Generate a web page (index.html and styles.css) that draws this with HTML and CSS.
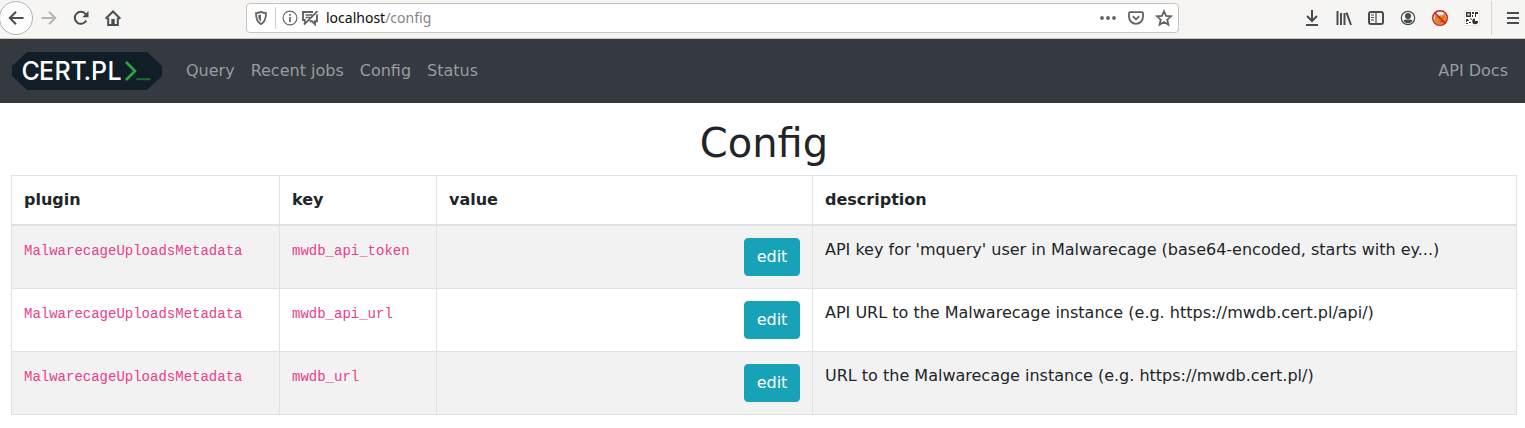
FILE: index.html
```html
<!DOCTYPE html>
<html lang="en">
<head>
<meta charset="utf-8">
<title>Config</title>
<link rel="stylesheet" href="styles.css">
</head>
<body>
<header class="toolbar">
  <div class="history">
    <span class="back"><svg class="icon" viewBox="0 0 16 16"><path d="M15.500 8H2M8 1.700L1.800 8 8 14.300"/></svg></span>
    <svg class="icon disabled" viewBox="0 0 16 16"><path d="M.5 8H14M8 1.700L14.200 8 8 14.300"/></svg>
    <svg class="icon" viewBox="0 0 16 16"><path d="M13.200 10.500A6 6 0 1 1 12.600 4.200"/><path class="solid" d="M15.500 1v6.200H9.300z"/></svg>
    <svg class="icon" viewBox="0 0 16 16"><path d="M.7 8.700L8 1.500l7.300 7.200M3.200 8v7h9.600V8"/><path class="solid" d="M6.300 9h3.400v6H6.300z"/></svg>
  </div>
  <div class="address">
    <svg class="icon grey" viewBox="0 0 16 16"><path d="M8 1.900c1.800.9 3.400 1.200 5 1.200 0 5.800-.8 9.100-5 11-4.200-1.900-5-5.200-5-11 1.600 0 3.200-.3 5-1.200z"/><path class="solid" d="M8 4.500v7.200C5.800 10.300 5.300 8.200 5.200 5.300z"/></svg>
    <span class="divider"></span>
    <svg class="icon grey thin info" viewBox="0 0 16 16"><circle cx="8" cy="8" r="6.900"/><path class="mark" d="M8 7v5M8 4v1.700"/></svg>
    <svg class="icon grey thin" viewBox="0 0 16 16"><path class="bubble" d="M11 2H1v8h1.800v3.500M15 4.500v6.700h-2v3L10 11.300H7.500"/><path class="mark" d="M15.500 1.200L2 14.700"/><path class="lines" d="M3.500 5h7M3.500 7.500h4.500"/></svg>
    <span class="url"><span class="host">localhost</span>/config</span>
    <div class="actions">
      <svg class="icon grey" viewBox="0 0 16 16"><g class="solid"><circle cx="2" cy="8" r="1.900"/><circle cx="8" cy="8" r="1.900"/><circle cx="14" cy="8" r="1.900"/></g></svg>
      <svg class="icon grey" viewBox="0 0 16 16"><path d="M2 2.200h12q1 0 1 1v3.600a7 7 0 0 1-14 0V3.200q0-1 1-1zM4.800 6.200L8 9.300l3.200-3.100"/></svg>
      <svg class="icon grey" viewBox="0 0 16 16"><path d="M8 1.200l2 4.600 5 .5-3.700 3.400 1.100 5L8 12.100l-4.400 2.600 1.100-5L1 6.300l5-.5z"/></svg>
    </div>
  </div>
  <div class="tools">
    <svg class="icon" viewBox="0 0 16 16"><path d="M8 0v10.500M3 6l5 5 5-5M2 15h12"/></svg>
    <svg class="icon" viewBox="0 0 16 16"><path d="M1.500 1v14M5 3v12M8.500 3v12M10.500 2.700L15 15"/></svg>
    <svg class="icon" viewBox="0 0 16 16"><rect x="1" y="2" width="14" height="12" rx="2"/><path class="hair" d="M8 2v12M3 5h3M3 7.500h3M3 10h3"/></svg>
    <svg class="icon" viewBox="0 0 16 16"><circle class="hair" cx="8" cy="8" r="6.700"/><circle class="solid" cx="8" cy="6" r="3"/><path class="solid" d="M3.300 11q1.200-1.800 3.300-1.500h2.800q2.100-.3 3.300 1.500Q11 13.300 8 13.300T3.300 11z"/></svg>
    <svg class="icon" viewBox="0 0 16 16"><path class="fox" d="M2.500 4l3 2 3-1 1.500.5L13 3l1 4 .5 4-3 3H5l-3-3 1-3z"/><path class="foxline" d="M6 7.500l1 1M11 7v1M7.500 11l2 .7 2-.9"/><circle class="ban" cx="8" cy="8" r="7.300"/><path class="ban" d="M3 3l10 10"/></svg>
    <svg class="icon" viewBox="0 0 16 16"><rect class="paper" x=".5" y=".5" width="15" height="15" rx="1"/><path class="qr" d="M2 2h5v5H2zM3.500 3.500v2h2v-2zM8 2h2v2H8zM11 2h3v2h-2v3h-1zM8 5h1v2H8zM2 9h2v1h1v1H3v1H2zM5 12h2v1H5zM2 13h2v1H2zM6 8.500h2v1H6z"/><path class="qr" d="M11 8.500v2.500h3a2.900 2.900 0 1 1-3-2.500z"/></svg>
    <span class="tool-divider"></span>
    <svg class="icon" viewBox="0 0 16 16"><path d="M2 3h12M2 8h12M2 13h12"/></svg>
  </div>
</header>
<nav class="navbar">
  <svg class="brand" viewBox="0 0 150 38">
    <path class="badge" d="M15 0h120l15 14v10l-15 14H15L0 24V14z"/>
    <text class="brand-text" x="9.500 27 42.500 58.500 71.500 79 95.500" y="28">CERT.PL</text>
    <path class="prompt" d="M114 10l9 9-9 9"/>
    <path class="cursor" d="M124.500 27.200h14"/>
  </svg>
  <a class="link">Query</a>
  <a class="link">Recent jobs</a>
  <a class="link">Config</a>
  <a class="link">Status</a>
  <a class="link docs">API Docs</a>
</nav>
<main class="content">
  <h1 class="title">Config</h1>
  <table class="config">
    <colgroup><col class="c-plugin"><col class="c-key"><col class="c-value"><col></colgroup>
    <thead><tr><th>plugin</th><th>key</th><th>value</th><th>description</th></tr></thead>
    <tbody>
      <tr><td><code>MalwarecageUploadsMetadata</code></td><td><code>mwdb_api_token</code></td><td class="value"><button class="edit">edit</button></td><td>API key for 'mquery' user in Malwarecage (base64-encoded, starts with ey...)</td></tr>
      <tr><td><code>MalwarecageUploadsMetadata</code></td><td><code>mwdb_api_url</code></td><td class="value"><button class="edit">edit</button></td><td>API URL to the Malwarecage instance (e.g. https://mwdb.cert.pl/api/)</td></tr>
      <tr><td><code>MalwarecageUploadsMetadata</code></td><td><code>mwdb_url</code></td><td class="value"><button class="edit">edit</button></td><td>URL to the Malwarecage instance (e.g. https://mwdb.cert.pl/)</td></tr>
    </tbody>
  </table>
</main>
</body>
</html>
```
FILE: styles.css
```css
* { box-sizing: border-box; }
body {
  margin: 0;
  background: #fff;
  color: #212529;
  font: 16px/24px "DejaVu Sans", sans-serif;
  overflow: hidden;
}
.toolbar {
  display: flex;
  height: 39px;
  background: #f6f5f4;
  border-bottom: 1px solid #c9c6bd;
}
.icon {
  flex: none;
  width: 16px;
  height: 16px;
  fill: none;
  stroke: #474e50;
  stroke-width: 2;
  overflow: visible;
}
.disabled { stroke: #b4b5b5; }
.grey { stroke: #636363; stroke-width: 1.8; }
.thin { stroke-width: 1.1; }
.mark { stroke-width: 1.7; }
.bubble { stroke-width: 1.9; }
.lines { stroke-width: 1.3; }
.hair { stroke-width: 1.2; }
.solid { fill: #474e50; stroke: none; }
.grey .solid { fill: #636363; }
.history {
  display: flex;
  align-items: center;
  gap: 16px;
  width: 246px;
  height: 36px;
}
.back {
  display: flex;
  align-items: center;
  justify-content: center;
  width: 34px;
  height: 34px;
  margin: 0 -8px 0 -1px;
  border: 1px solid #b4b2ae;
  border-radius: 50%;
  background: #fdfdfd;
}
.address {
  display: flex;
  align-items: center;
  width: 933px;
  height: 30px;
  margin-top: 3px;
  padding: 0 6px;
  border: 1px solid #c9c4be;
  border-radius: 4px;
  background: #fff;
}
.divider {
  width: 1px;
  height: 22px;
  margin: 0 6px;
  background: #cfcfcf;
}
.info { margin-right: 4px; }
.url {
  margin-left: 8px;
  color: #858585;
  font: 14px/20px "Noto Sans", sans-serif;
}
.host { color: #0c0c0d; }
.actions { display: flex; gap: 12px; margin-left: auto; }
.tools {
  display: flex;
  align-items: center;
  gap: 16px;
  height: 36px;
  margin-left: 125px;
}
.tool-divider {
  width: 1px;
  height: 34px;
  margin: 0 -3px 0 -5px;
  background: #d7d5d2;
}
.fox { fill: #e18528; stroke: none; }
.foxline { stroke: #8b4a20; stroke-width: 1; }
.ban { stroke: #d0161b; stroke-width: 1.4; }
.paper { fill: #fff; stroke: #e6e5e4; stroke-width: 1; }
.qr { fill: #333; fill-rule: evenodd; stroke: none; }
.navbar {
  display: flex;
  align-items: center;
  height: 64px;
  padding: 0 17px 0 12px;
  background: #343a40;
}
.brand { width: 150px; height: 38px; margin-right: 16px; }
.badge { fill: #111d27; }
.brand-text { fill: #fff; font: 500 25px "Inter", sans-serif; }
.prompt { fill: none; stroke: #28a745; stroke-width: 2.600; }
.cursor { stroke: #1d6b38; stroke-width: 2; }
.link { padding: 0 8px; color: #999c9f; }
.docs { margin-left: auto; padding-right: 0; }
.content { padding: 16px 8px 0 11px; }
.title {
  margin: 0 0 8px;
  font-size: 40px;
  font-weight: 400;
  line-height: 48px;
  text-align: center;
}
.config {
  width: 1506px;
  table-layout: fixed;
  border-collapse: collapse;
}
.c-plugin { width: 268px; }
.c-key { width: 157px; }
.c-value { width: 376px; }
.config th, .config td {
  padding: 12px;
  border: 1px solid #dee2e6;
  text-align: left;
  vertical-align: top;
}
.config thead th { border-bottom-width: 2px; }
.config tbody tr:nth-child(odd) { background: #f2f2f2; }
.config .value { text-align: right; }
code { color: #e83e8c; font: 14px "Liberation Mono", monospace; }
.edit {
  display: block;
  width: 56px;
  height: 38px;
  margin-left: auto;
  padding: 0;
  border: 1px solid #17a2b8;
  border-radius: 4px;
  background: #17a2b8;
  color: #fff;
  font: inherit;
}
```
